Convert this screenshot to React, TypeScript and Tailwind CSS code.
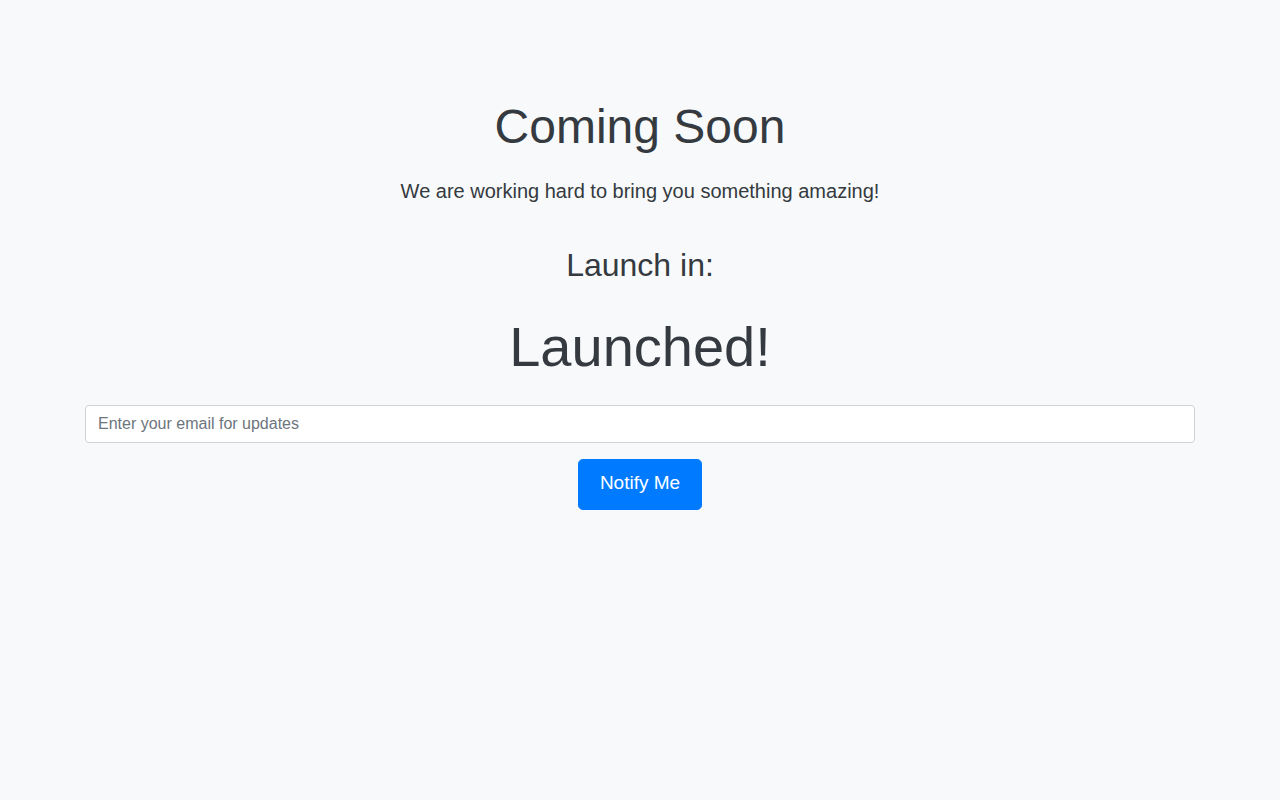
import React from "react";

export default function App() {
  return (
    <div
      className="min-h-[800px] w-full bg-[#f8f9fa] text-[#343a40]"
      style={{ fontFamily: '"Liberation Sans", Arial, sans-serif' }}
    >
      <div className="mx-auto w-[1140px] px-[15px] text-center">
        <h1 className="pt-[98px] text-[48px] leading-[1.2] font-normal">Coming Soon</h1>
        <p className="mt-[20px] text-[20px] leading-[1.5]">
          We are working hard to bring you something amazing!
        </p>
        <h2 className="mt-[40px] text-[32px] leading-[1.2] font-normal">Launch in:</h2>
        <div className="mt-[29px] text-[56px] leading-[1.2] font-normal">Launched!</div>
        <input
          type="email"
          placeholder="Enter your email for updates"
          className="mt-[25px] block h-[38px] w-full rounded-[4px] border border-[#ced4da] bg-white px-[12px] text-[16px] leading-[1.5] text-[#495057] placeholder:text-[#6c757d] outline-none"
        />
        <button
          type="button"
          className="mt-[16px] inline-block h-[51px] w-[124px] rounded-[4.8px] border border-[#007bff] bg-[#007bff] pt-[8px] pb-[11px] text-[19px] leading-[30px] text-white"
        >
          Notify Me
        </button>
      </div>
    </div>
  );
}
